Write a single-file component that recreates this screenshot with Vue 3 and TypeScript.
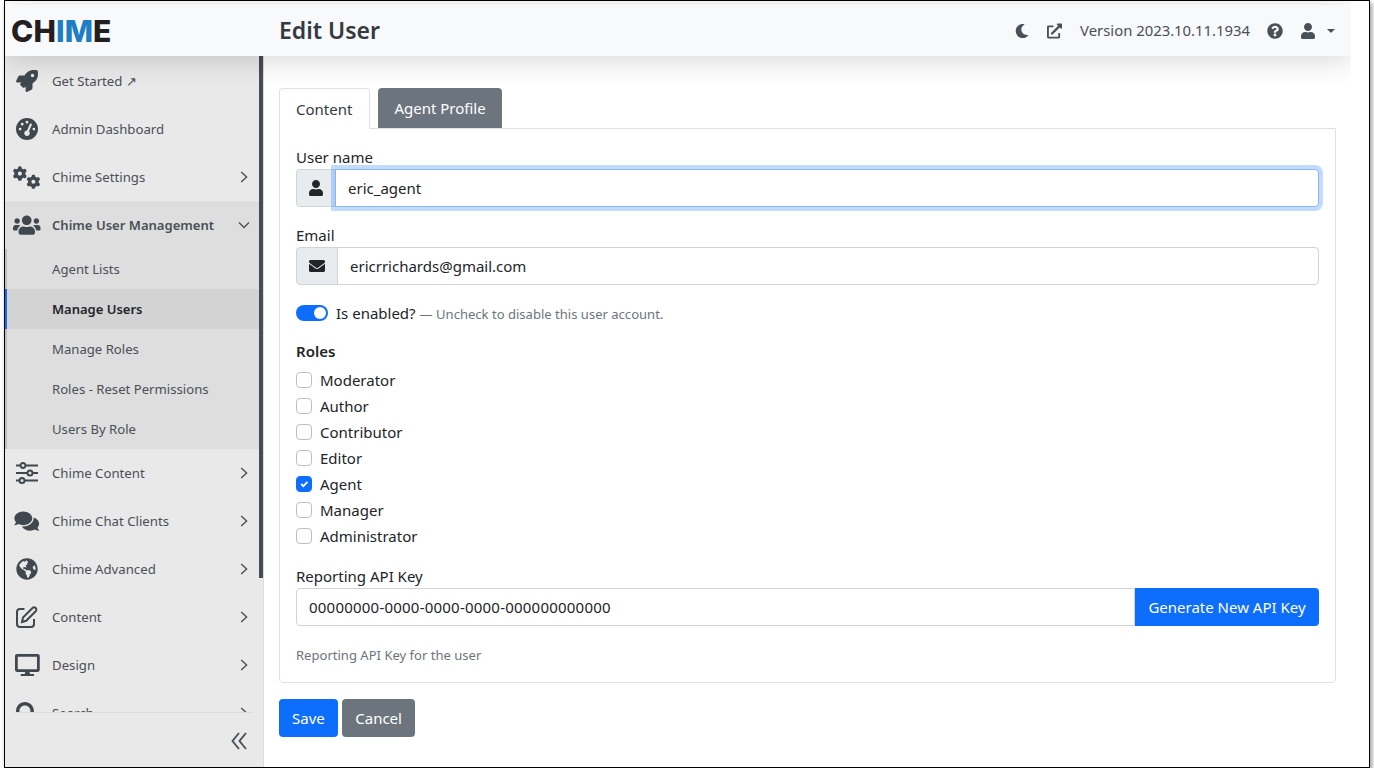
<script setup lang="ts">
interface IconPath {
  d: string
  transform?: string
}

interface Icon {
  box: string
  width: number
  paths: IconPath[]
  line?: boolean
}

const gear =
  'M308.5 135.3c7.1-6.3 9.9-16.2 6.2-25c-2.3-5.3-4.8-10.5-7.6-15.5L304 89.4c-3-5-6.3-9.9-9.8-14.6c-5.7-7.6-15.7-10.1-24.7-7.1l-28.2 9.3c-10.7-8.8-23-16-36.2-20.9L199 27.1c-1.9-9.3-9.1-16.7-18.5-17.8C173.9 8.4 167.2 8 160.4 8h-.7c-6.8 0-13.5 .4-20.1 1.2c-9.4 1.1-16.6 8.6-18.5 17.8L115 56.1c-13.3 5-25.5 12.1-36.2 20.9L50.5 67.8c-9-3-19-.5-24.7 7.1c-3.5 4.7-6.8 9.6-9.9 14.6l-3 5.3c-2.8 5-5.3 10.2-7.6 15.6c-3.7 8.7-.9 18.6 6.2 25l22.2 19.8C32.6 161.9 32 168.9 32 176s.6 14.1 1.7 20.9L11.5 216.7c-7.1 6.3-9.9 16.2-6.2 25c2.3 5.3 4.8 10.5 7.6 15.6l3 5.2c3 5.1 6.3 9.9 9.9 14.6c5.7 7.6 15.7 10.1 24.7 7.1l28.2-9.3c10.7 8.8 23 16 36.2 20.9l6.1 29.1c1.9 9.3 9.1 16.7 18.5 17.8c6.7 .8 13.5 1.2 20.4 1.2s13.7-.4 20.4-1.2c9.4-1.1 16.6-8.6 18.5-17.8l6.1-29.1c13.3-5 25.5-12.1 36.2-20.9l28.2 9.3c9 3 19 .5 24.7-7.1c3.5-4.7 6.8-9.5 9.8-14.6l3.1-5.4c2.8-5 5.3-10.2 7.6-15.5c3.7-8.7 .9-18.6-6.2-25l-22.2-19.8c1.1-6.8 1.7-13.8 1.7-20.9s-.6-14.1-1.7-20.9l22.2-19.8zM112 176a48 48 0 1 1 96 0 48 48 0 1 1 -96 0z'

const icons: Record<string, Icon> = {
  rocket: {
    box: '0 0 512 512',
    width: 22,
    paths: [{ d: 'M505.12019,19.09375c-1.18945-5.53125-6.65819-11-12.207-12.1875C460.716,0,435.507,0,410.40747,0,307.17523,0,245.26909,55.20312,199.05238,128H94.83772c-16.34763.01562-35.55658,11.875-42.88664,26.48438L2.51562,253.29688A28.4,28.4,0,0,0,0,264a24.00867,24.00867,0,0,0,24.00582,24H127.81618l-22.47457,22.46875c-11.36521,11.36133-12.99607,32.25781,0,45.25L156.24582,406.625c11.15623,11.1875,32.15619,13.15625,45.27726,0l22.47457-22.46875V488a24.00867,24.00867,0,0,0,24.00581,24,28.55934,28.55934,0,0,0,10.707-2.51562l98.72834-49.39063c14.62888-7.29687,26.50776-26.5,26.50776-42.85937V312.79688c72.59753-46.3125,128.03493-108.40626,128.03493-211.09376C512.07526,76.5,512.07526,51.29688,505.12019,19.09375ZM384.04033,168A40,40,0,1,1,424.05,128,40.02322,40.02322,0,0,1,384.04033,168Z' }],
  },
  gauge: {
    box: '0 0 512 512',
    width: 22,
    paths: [{ d: 'M0 256a256 256 0 1 1 512 0A256 256 0 1 1 0 256zM288 96a32 32 0 1 0 -64 0 32 32 0 1 0 64 0zM256 416c35.3 0 64-28.7 64-64c0-17.4-6.9-33.1-18.1-44.6L366 161.7c5.3-12.1-.2-26.3-12.3-31.6s-26.3 .2-31.6 12.3L257.9 288c-.6 0-1.3 0-1.9 0c-35.3 0-64 28.7-64 64s28.7 64 64 64zM176 144a32 32 0 1 0 -64 0 32 32 0 1 0 64 0zM96 288a32 32 0 1 0 0-64 32 32 0 1 0 0 64zm352-32a32 32 0 1 0 -64 0 32 32 0 1 0 64 0z' }],
  },
  gears: {
    box: '0 0 640 512',
    width: 27.5,
    paths: [{ d: gear }, { d: gear, transform: 'translate(318 195) scale(.98)' }],
  },
  users: {
    box: '0 0 640 512',
    width: 27.5,
    paths: [{ d: 'M96 224c35.3 0 64-28.7 64-64s-28.7-64-64-64-64 28.7-64 64 28.7 64 64 64zm448 0c35.3 0 64-28.7 64-64s-28.7-64-64-64-64 28.7-64 64 28.7 64 64 64zm32 32h-64c-17.6 0-33.5 7.1-45.1 18.6 40.3 22.1 68.9 62 75.1 109.4h66c17.7 0 32-14.3 32-32v-32c0-35.3-28.7-64-64-64zm-256 0c61.9 0 112-50.1 112-112S381.9 32 320 32 208 82.1 208 144s50.1 112 112 112zm76.8 32h-8.3c-20.8 10-43.9 16-68.5 16s-47.6-6-68.5-16h-8.3C179.6 288 128 339.6 128 403.2V432c0 26.5 21.5 48 48 48h288c26.5 0 48-21.5 48-48v-28.8c0-63.6-51.6-115.2-115.2-115.2zm-223.7-13.4C161.5 263.1 145.6 256 128 256H64c-35.3 0-64 28.7-64 64v32c0 17.7 14.3 32 32 32h65.9c6.3-47.4 34.9-87.3 75.2-109.4z' }],
  },
  sliders: {
    box: '0 0 22 22',
    width: 22,
    line: true,
    paths: [{ d: 'M0 3.5H4.5M9.5 3.5H22M4.5 3.5a2.5 2.5 0 1 0 5 0a2.5 2.5 0 1 0-5 0M0 11H11.5M16.5 11H22M11.5 11a2.5 2.5 0 1 0 5 0a2.5 2.5 0 1 0-5 0M0 18.5H3.5M8.5 18.5H22M3.5 18.5a2.5 2.5 0 1 0 5 0a2.5 2.5 0 1 0-5 0' }],
  },
  comments: {
    box: '0 0 576 512',
    width: 27.5,
    paths: [{ d: 'M416 192c0-88.4-93.1-160-208-160S0 103.6 0 192c0 34.3 14.1 65.9 38 92-13.4 30.2-35.5 54.2-35.8 54.5-2.2 2.3-2.8 5.7-1.5 8.7S4.8 352 8 352c36.6 0 66.9-12.3 88.7-25 32.2 15.7 70.3 25 111.3 25 114.9 0 208-71.6 208-160zm122 220c23.9-26 38-57.7 38-92 0-66.9-53.5-124.2-129.3-148.1.9 6.6 1.3 13.3 1.3 20.1 0 105.9-107.7 192-240 192-10.8 0-21.3-.8-31.7-1.9C207.8 439.6 281.8 480 368 480c41 0 79.1-9.2 111.3-25 21.8 12.7 52.1 25 88.7 25 3.2 0 6.1-1.9 7.3-4.8 1.3-2.9.7-6.3-1.5-8.7-.3-.3-22.4-24.2-35.8-54.5z' }],
  },
  globe: {
    box: '0 0 496 512',
    width: 22,
    paths: [{ d: 'M248 8C111.03 8 0 119.03 0 256s111.03 248 248 248 248-111.03 248-248S384.97 8 248 8zm82.29 357.6c-3.9 3.88-7.99 7.95-11.31 11.28-2.99 3-5.1 6.7-6.17 10.71-1.51 5.66-2.73 11.38-4.77 16.87l-17.39 46.85c-13.76 3-28 4.69-42.65 4.69v-27.38c1.69-12.62-7.64-36.26-22.63-51.25-6-6-9.37-14.14-9.37-22.63v-32.01c0-11.64-6.27-22.34-16.46-27.97-14.37-7.95-34.81-19.06-48.81-26.11-11.48-5.78-22.1-13.14-31.65-21.75l-.8-.72a114.792 114.792 0 0 1-18.06-20.74c-9.38-13.77-24.66-36.42-34.59-51.14 20.47-45.5 57.36-82.04 103.2-101.89l24.01 12.01C203.48 89.74 216 82.01 216 70.11v-11.3c7.99-1.29 16.12-2.11 24.39-2.42l28.3 28.3c6.25 6.25 6.25 16.38 0 22.63L264 112l-10.34 10.34c-3.12 3.12-3.12 8.19 0 11.31l4.69 4.69c3.12 3.12 3.12 8.19 0 11.31l-8 8a8.008 8.008 0 0 1-5.66 2.34h-8.99c-2.08 0-4.08.81-5.58 2.27l-9.92 9.65a8.008 8.008 0 0 0-1.58 9.31l15.59 31.19c2.66 5.32-1.21 11.58-7.15 11.58h-5.64c-1.93 0-3.79-.7-5.24-1.96l-9.28-8.06a16.017 16.017 0 0 0-15.55-3.1l-31.17 10.39a11.95 11.95 0 0 0-8.17 11.34c0 4.53 2.56 8.66 6.61 10.69l11.08 5.54c9.41 4.71 19.79 7.16 30.31 7.16s22.59 27.29 32 32h66.75c8.49 0 16.62 3.37 22.63 9.37l13.69 13.69a30.503 30.503 0 0 1 8.93 21.57 46.536 46.536 0 0 1-13.72 32.98zM417 274.25c-5.79-1.45-10.84-5-14.15-9.97l-17.98-26.97a23.97 23.97 0 0 1 0-26.62l19.59-29.38c2.32-3.47 5.5-6.29 9.24-8.15l12.98-6.49C440.2 193.59 448 223.87 448 256c0 8.67-.74 17.16-1.82 25.54L417 274.25z' }],
  },
  edit: {
    box: '0 0 22 22',
    width: 22,
    line: true,
    paths: [{ d: 'M8.5 3H4a3 3 0 0 0-3 3v12a3 3 0 0 0 3 3h11a3 3 0 0 0 3-3v-5M7 11.5L16.5 2a2.1 2.1 0 0 1 3.2 3.2L10.2 14.8L6 16z' }],
  },
  desktop: {
    box: '0 0 576 512',
    width: 24.75,
    paths: [{ d: 'M528 0H48C21.5 0 0 21.5 0 48v320c0 26.5 21.5 48 48 48h192l-16 48h-72c-13.3 0-24 10.7-24 24s10.7 24 24 24h272c13.3 0 24-10.7 24-24s-10.7-24-24-24h-72l-16-48h192c26.5 0 48-21.5 48-48V48c0-26.5-21.5-48-48-48zm-16 352H64V64h448v288z' }],
  },
  search: {
    box: '0 0 512 512',
    width: 22,
    paths: [{ d: 'M505 442.7L405.3 343c-4.5-4.5-10.6-7-17-7H372c27.6-35.3 44-79.7 44-128C416 93.1 322.9 0 208 0S0 93.1 0 208s93.1 208 208 208c48.3 0 92.7-16.4 128-44v16.3c0 6.4 2.5 12.5 7 17l99.7 99.7c9.4 9.4 24.6 9.4 33.9 0l28.3-28.3c9.4-9.4 9.4-24.6.1-34zM208 336c-70.7 0-128-57.2-128-128 0-70.7 57.2-128 128-128 70.7 0 128 57.2 128 128 0 70.7-57.2 128-128 128z' }],
  },
}

const userPath =
  'M224 256c70.7 0 128-57.3 128-128S294.7 0 224 0 96 57.3 96 128s57.3 128 128 128zm89.6 32h-16.7c-22.2 10.2-46.9 16-72.9 16s-50.6-5.8-72.9-16h-16.7C60.2 288 0 348.2 0 422.4V464c0 26.5 21.5 48 48 48h352c26.5 0 48-21.5 48-48v-41.6c0-74.2-60.2-134.4-134.4-134.4z'
const envelopePath =
  'M502.3 190.8c3.9-3.1 9.7-.2 9.7 4.7V400c0 26.5-21.5 48-48 48H48c-26.5 0-48-21.5-48-48V195.6c0-5 5.7-7.8 9.7-4.7 22.4 17.4 52.1 39.5 154.1 113.6 21.1 15.4 56.7 47.8 92.2 47.6 35.7.3 72-32.8 92.3-47.6 102-74.1 131.6-96.3 154-113.7zM256 320c23.2.4 56.6-29.2 73.4-41.4 132.7-96.3 142.8-104.7 173.4-128.7 5.8-4.5 9.2-11.5 9.2-18.9v-19c0-26.5-21.5-48-48-48H48C21.5 64 0 85.5 0 112v19c0 7.4 3.4 14.3 9.2 18.9 30.6 23.9 40.7 32.4 173.4 128.7 16.8 12.2 50.2 41.8 73.4 41.4z'

interface NavItem {
  label: string
  icon: string
  arrow?: 'right' | 'down'
  children?: { label: string; active?: boolean }[]
}

const nav: NavItem[] = [
  { label: 'Get Started ↗', icon: 'rocket' },
  { label: 'Admin Dashboard', icon: 'gauge' },
  { label: 'Chime Settings', icon: 'gears', arrow: 'right' },
  {
    label: 'Chime User Management',
    icon: 'users',
    arrow: 'down',
    children: [
      { label: 'Agent Lists' },
      { label: 'Manage Users', active: true },
      { label: 'Manage Roles' },
      { label: 'Roles - Reset Permissions' },
      { label: 'Users By Role' },
    ],
  },
  { label: 'Chime Content', icon: 'sliders', arrow: 'right' },
  { label: 'Chime Chat Clients', icon: 'comments', arrow: 'right' },
  { label: 'Chime Advanced', icon: 'globe', arrow: 'right' },
  { label: 'Content', icon: 'edit', arrow: 'right' },
  { label: 'Design', icon: 'desktop', arrow: 'right' },
  { label: 'Search', icon: 'search', arrow: 'right' },
]

const roles = [
  { name: 'Moderator', checked: false },
  { name: 'Author', checked: false },
  { name: 'Contributor', checked: false },
  { name: 'Editor', checked: false },
  { name: 'Agent', checked: true },
  { name: 'Manager', checked: false },
  { name: 'Administrator', checked: false },
]
</script>

<template>
  <div class="frame">
    <div class="page">
      <header class="topbar">
        <div class="logo">CH<span class="logo-blue">IM</span>E</div>
        <h1 class="title">Edit User</h1>
        <div class="top-tools">
          <svg class="tool moon" viewBox="0 0 512 512"><path d="M283.211 512c78.962 0 151.079-35.925 198.857-94.792 7.068-8.708-.639-21.43-11.562-19.35-124.203 23.654-238.262-71.576-238.262-196.954 0-72.222 38.662-138.635 101.498-174.394 9.686-5.512 7.25-20.197-3.756-22.23A258.156 258.156 0 0 0 283.211 0c-141.309 0-256 114.511-256 256 0 141.309 114.511 256 256 256z" /></svg>
          <svg class="tool ext" viewBox="0 0 512 512"><path d="M432,320H400a16,16,0,0,0-16,16V448H64V128H208a16,16,0,0,0,16-16V80a16,16,0,0,0-16-16H48A48,48,0,0,0,0,112V464a48,48,0,0,0,48,48H400a48,48,0,0,0,48-48V336A16,16,0,0,0,432,320ZM488,0h-128c-21.37,0-32.05,25.91-17,41l35.73,35.73L135,320.37a24,24,0,0,0,0,34L157.67,377a24,24,0,0,0,34,0L435.28,133.32,471,169c15,15,41,4.5,41-17V24A24,24,0,0,0,488,0Z" /></svg>
          <span class="version">Version 2023.10.11.1934</span>
          <svg class="tool question" viewBox="0 0 512 512"><path d="M504 256c0 136.997-111.043 248-248 248S8 392.997 8 256C8 119.083 119.043 8 256 8s248 111.083 248 248zM262.655 90c-54.497 0-89.255 22.957-116.549 63.758-3.536 5.286-2.353 12.415 2.715 16.258l34.699 26.31c5.205 3.947 12.621 3.008 16.665-2.122 17.864-22.658 30.113-35.797 57.303-35.797 20.429 0 45.698 13.148 45.698 32.958 0 14.976-12.363 22.667-32.534 33.976C247.128 238.528 216 254.941 216 296v4c0 6.627 5.373 12 12 12h56c6.627 0 12-5.373 12-12v-1.333c0-28.462 83.186-29.647 83.186-106.667 0-58.002-60.165-102-116.531-102zM256 338c-25.365 0-46 20.635-46 46 0 25.364 20.635 46 46 46s46-20.636 46-46c0-25.365-20.635-46-46-46z" /></svg>
          <svg class="tool person" viewBox="0 0 448 512"><path :d="userPath" /></svg>
          <span class="caret"></span>
        </div>
      </header>

      <div class="body">
        <aside class="sidebar">
          <nav class="nav">
            <div class="nav-scroll">
              <template v-for="item in nav" :key="item.label">
                <div class="nav-item" :class="{ open: item.children }">
                  <span class="nav-icon">
                    <svg
                      :viewBox="icons[item.icon].box"
                      :class="{ 'icon-line': icons[item.icon].line }"
                      :style="{ width: icons[item.icon].width + 'px' }"
                      height="22"
                    >
                      <path v-for="(p, i) in icons[item.icon].paths" :key="i" :d="p.d" :transform="p.transform" />
                    </svg>
                  </span>
                  <span class="nav-label">{{ item.label }}</span>
                  <svg v-if="item.arrow === 'right'" class="arrow arrow-right" viewBox="0 0 8 12"><path d="M1.2 1L6.6 6L1.2 11" /></svg>
                  <svg v-else-if="item.arrow === 'down'" class="arrow arrow-down" viewBox="0 0 12 8"><path d="M1 1.4L6 6.4L11 1.4" /></svg>
                </div>
                <div v-if="item.children" class="sub-list">
                  <div
                    v-for="child in item.children"
                    :key="child.label"
                    class="sub-item"
                    :class="{ active: child.active }"
                  >
                    {{ child.label }}
                  </div>
                </div>
              </template>
            </div>
            <div class="scroll-thumb"></div>
          </nav>
          <div class="side-foot">
            <svg class="collapse" viewBox="0 0 16 18"><path d="M8 1L1.5 9L8 17M15 1L8.5 9L15 17" /></svg>
          </div>
        </aside>

        <main class="content">
          <div class="tabs">
            <div class="tab tab-active">Content</div>
            <div class="tab tab-dark">Agent Profile</div>
          </div>
          <section class="card">
            <label class="field-label">User name</label>
            <div class="input-group focused">
              <span class="addon"><svg class="addon-icon" width="14" height="16" viewBox="0 0 448 512"><path :d="userPath" /></svg></span>
              <input class="control" type="text" value="eric_agent" readonly />
            </div>

            <label class="field-label second">Email</label>
            <div class="input-group">
              <span class="addon"><svg class="addon-icon" width="16" height="16" viewBox="0 0 512 512"><path :d="envelopePath" /></svg></span>
              <input class="control" type="text" value="ericrrichards@gmail.com" readonly />
            </div>

            <div class="switch-row">
              <span class="switch"><span class="knob"></span></span>
              <span class="switch-text">Is enabled?</span>
              <span class="hint">— Uncheck to disable this user account.</span>
            </div>

            <div class="roles-title">Roles</div>
            <div class="roles">
              <label v-for="role in roles" :key="role.name" class="role">
                <span class="check" :class="{ checked: role.checked }">
                  <svg v-if="role.checked" viewBox="0 0 20 20"><path d="M6 10l3 3l6-6" /></svg>
                </span>
                {{ role.name }}
              </label>
            </div>

            <label class="field-label api-label">Reporting API Key</label>
            <div class="input-group">
              <input class="control plain" type="text" value="00000000-0000-0000-0000-000000000000" readonly />
              <button class="btn btn-primary btn-append" type="button">Generate New API Key</button>
            </div>
            <div class="help">Reporting API Key for the user</div>
          </section>

          <div class="actions">
            <button class="btn btn-primary" type="button">Save</button>
            <button class="btn btn-secondary" type="button">Cancel</button>
          </div>
        </main>
      </div>
    </div>
  </div>
</template>

<style>
html,
body {
  margin: 0;
  background: #fff;
  overflow: hidden;
}
</style>

<style scoped>
.frame {
  box-sizing: border-box;
  width: 1366px;
  height: 768px;
  margin-left: 4px;
  border: 1px solid #000;
  border-width: 1px 1px 1.5px 1.5px;
  background: #fff;
  box-shadow: 2px 3px 5px rgba(0, 0, 0, 0.4);
  overflow: hidden;
  font-family: "Noto Sans", sans-serif;
  font-size: 15px;
  color: #212529;
}
.page {
  width: 1346px;
  height: 100%;
  display: flex;
  flex-direction: column;
  overflow: hidden;
}

/* top bar */
.topbar {
  position: relative;
  z-index: 2;
  flex: none;
  height: 51px;
  margin-top: 4px;
  display: flex;
  align-items: center;
  background: #f8f9fa;
  box-shadow: 0 4px 28px rgba(0, 0, 0, 0.16);
}
.logo {
  width: 274px;
  padding-left: 6px;
  box-sizing: border-box;
  font-family: Inter, sans-serif;
  font-weight: 800;
  font-size: 30px;
  line-height: 36px;
  margin-top: 1px;
  letter-spacing: 0.1px;
  color: #231f20;
}
.logo-blue {
  color: #1f7dc4;
}
.title {
  margin: -2px 0 0;
  font-size: 23px;
  font-weight: 600;
  color: #343a40;
}
.top-tools {
  margin-left: auto;
  display: flex;
  align-items: center;
  padding-right: 16px;
  color: #495057;
}
.tool {
  display: block;
  height: 16px;
  fill: #495057;
}
.moon {
  width: 14px;
}
.ext {
  width: 15px;
  margin-left: 18px;
}
.version {
  margin: -2px 0 0 18px;
  font-size: 14.85px;
}
.question {
  width: 16px;
  margin-left: 17px;
}
.person {
  width: 14px;
  margin-left: 18px;
}
.caret {
  margin-left: 12px;
  border-top: 4px solid #495057;
  border-left: 4px solid transparent;
  border-right: 4px solid transparent;
}

/* sidebar */
.body {
  flex: 1;
  min-height: 0;
  display: flex;
}
.sidebar {
  flex: none;
  width: 258px;
  display: flex;
  flex-direction: column;
  background: #e9e9e9;
  border-right: 1px solid #dcdcdc;
}
.nav {
  position: relative;
  flex: 1;
  min-height: 0;
  overflow: hidden;
}
.nav-scroll {
  padding-top: 1px;
}
.scroll-thumb {
  position: absolute;
  top: 0;
  right: 0;
  width: 4px;
  height: 522px;
  background: #454d55;
}
.nav-item {
  display: flex;
  align-items: center;
  height: 48px;
  padding-right: 14px;
  font-size: 13.2px;
  color: #495057;
}
.nav-item.open {
  background: #dedede;
  font-weight: 600;
  font-size: 13.05px;
}
.nav-icon {
  flex: none;
  width: 44px;
  margin-right: 3px;
  display: flex;
  justify-content: center;
}
.nav-icon svg {
  display: block;
  fill: #40484f;
  overflow: visible;
}
.nav-icon svg.icon-line {
  fill: none;
  stroke: #40484f;
  stroke-width: 2;
}
.nav-label {
  flex: 1;
  white-space: nowrap;
}
.arrow {
  flex: none;
  fill: none;
  stroke: #495057;
  stroke-width: 1.4;
}
.arrow-right {
  width: 8px;
  height: 12px;
  margin-right: 1px;
}
.arrow-down {
  width: 12px;
  height: 8px;
  margin-right: -1px;
}
.sub-list {
  background: #dedede;
  border-left: 2px solid #bdbdbd;
}
.sub-item {
  height: 40px;
  display: flex;
  align-items: center;
  padding-left: 45px;
  font-size: 13.15px;
  color: #495057;
}
.sub-item.active {
  margin-left: -2px;
  border-left: 2px solid #0d6efd;
  background: #d3d3d3;
  font-weight: 600;
  font-size: 13px;
  color: #212529;
}
.side-foot {
  flex: none;
  height: 54px;
  margin: 0 10px;
  border-top: 1px solid #dcdcdc;
  display: flex;
  align-items: center;
  justify-content: flex-end;
  padding-right: 6px;
}
.collapse {
  width: 16px;
  height: 18px;
  margin-top: 2px;
  fill: none;
  stroke: #495057;
  stroke-width: 1.9;
}

/* main */
.content {
  flex: 1;
  min-width: 0;
  padding: 32px 15px 0;
}
.tabs {
  display: flex;
  gap: 8px;
  position: relative;
  z-index: 1;
  margin-bottom: -1px;
}
.tab {
  height: 40px;
  box-sizing: border-box;
  padding: 0 15px;
  display: flex;
  align-items: center;
  border-radius: 4px 4px 0 0;
  border: 1px solid transparent;
}
.tab-active {
  height: 41px;
  padding: 0 17px 0 16px;
  background: #fff;
  border-color: #dee2e6 #dee2e6 #fff;
  color: #343a40;
}
.tab-dark {
  background: #6c757d;
  color: #fff;
}
.card {
  border: 1px solid #dee2e6;
  border-radius: 0 0 4px 4px;
  padding: 16px;
  height: 555px;
  box-sizing: border-box;
}
.field-label {
  display: block;
  height: 24px;
  line-height: 24px;
}
.field-label.second {
  margin-top: 16px;
}
.input-group {
  display: flex;
  height: 38px;
}
.addon {
  flex: none;
  display: flex;
  align-items: center;
  padding: 0 12px;
  background: #e9ecef;
  border: 1px solid #ced4da;
  border-radius: 4px 0 0 4px;
}
.addon-icon {
  display: block;
  fill: #212529;
}
.control {
  flex: 1;
  min-width: 0;
  box-sizing: border-box;
  margin-left: -1px;
  padding: 0 12px;
  border: 1px solid #ced4da;
  border-radius: 0 4px 4px 0;
  background: #fff;
  font: inherit;
  color: #212529;
  outline: none;
}
.focused .control {
  position: relative;
  border-color: #86b7fe;
  box-shadow: 0 0 0 4px rgba(13, 110, 253, 0.25);
}
.control.plain {
  margin-left: 0;
  border-radius: 4px 0 0 4px;
  letter-spacing: 0.22px;
}
.switch-row {
  display: flex;
  align-items: center;
  height: 24px;
  margin-top: 16px;
}
.switch {
  width: 32px;
  height: 16px;
  border-radius: 8px;
  background: #0d6efd;
  display: flex;
  align-items: center;
  justify-content: flex-end;
  padding-right: 2px;
  box-sizing: border-box;
}
.knob {
  width: 12px;
  height: 12px;
  border-radius: 50%;
  background: #fff;
}
.switch-text {
  margin-left: 8px;
}
.hint {
  margin: 1px 0 0 4px;
  font-size: 13.05px;
  color: #6c757d;
}
.roles-title {
  margin-top: 14px;
  height: 24px;
  line-height: 24px;
  font-weight: 600;
}
.roles {
  margin-top: 4px;
}
.role {
  display: flex;
  align-items: center;
  height: 26px;
}
.check {
  flex: none;
  width: 16px;
  height: 16px;
  box-sizing: border-box;
  margin-right: 8px;
  border: 1px solid #bfbfbf;
  border-radius: 4px;
  background: #fff;
}
.check.checked {
  background: #0d6efd;
  border-color: #0d6efd;
}
.check svg {
  display: block;
  width: 14px;
  height: 14px;
  fill: none;
  stroke: #fff;
  stroke-width: 2.6;
}
.api-label {
  margin-top: 15px;
}
.btn {
  height: 38px;
  box-sizing: border-box;
  padding: 0 12px;
  border: 1px solid transparent;
  border-radius: 4px;
  font: inherit;
  color: #fff;
  white-space: nowrap;
}
.btn-primary {
  background: #0d6efd;
}
.btn-secondary {
  background: #6c757d;
  padding: 0 12.5px;
}
.btn-append {
  flex: none;
  width: 184px;
  padding: 0;
  border-radius: 0 4px 4px 0;
}
.help {
  margin-top: 19px;
  font-size: 13.05px;
  line-height: 20px;
  color: #6c757d;
}
.actions {
  display: flex;
  gap: 4px;
  margin-top: 16px;
}
</style>
